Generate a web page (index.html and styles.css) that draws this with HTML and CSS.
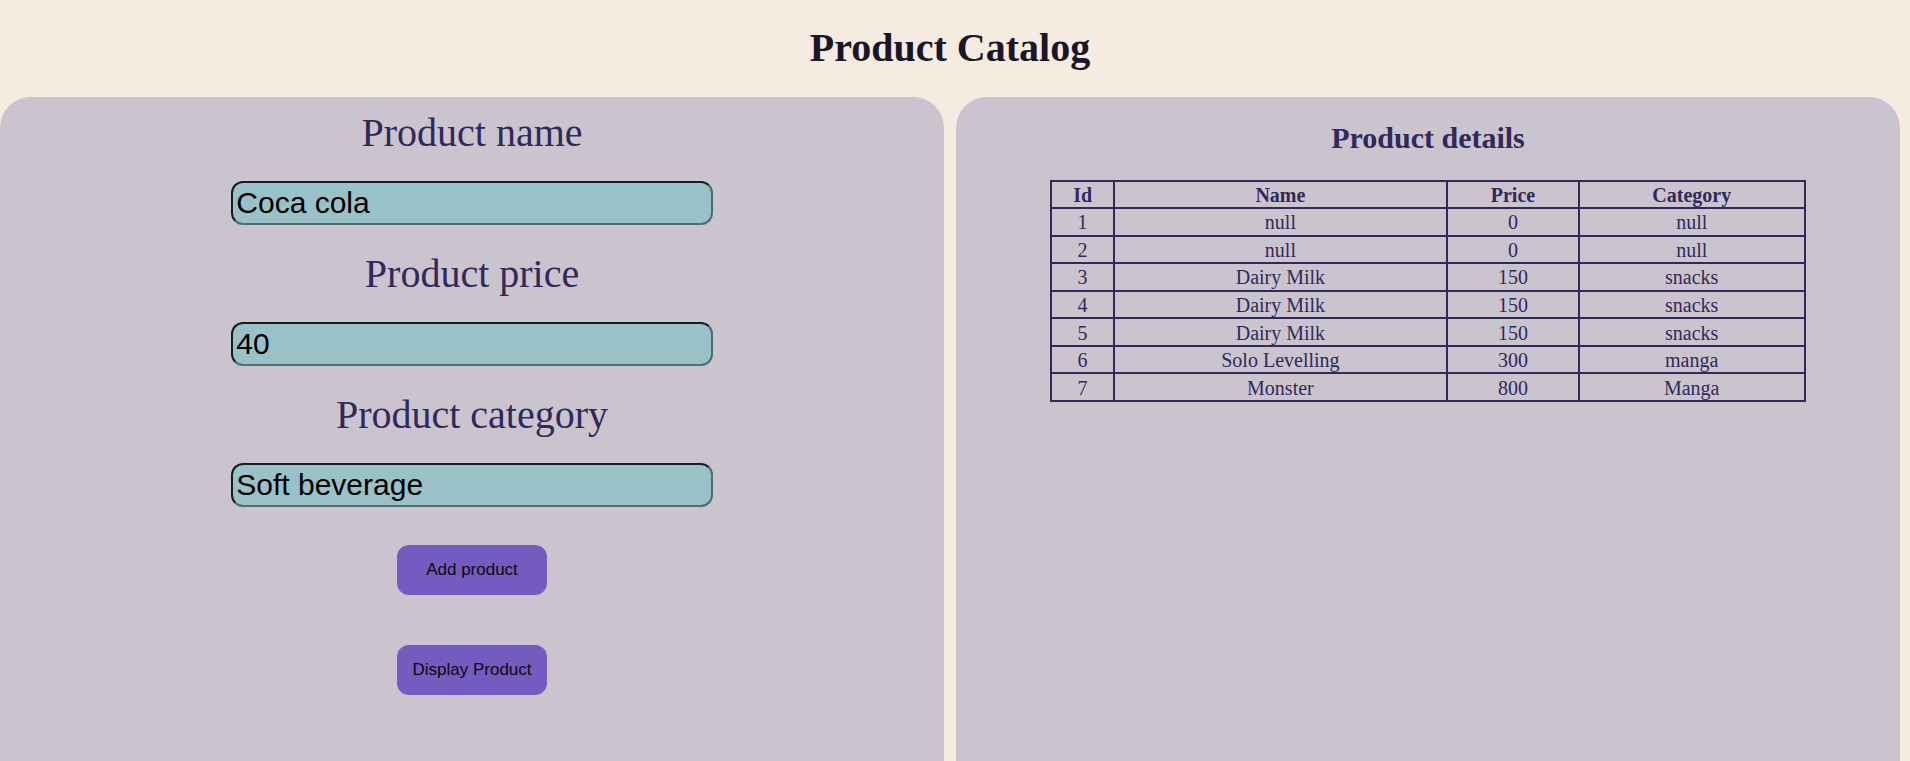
FILE: index.html
```html
<!DOCTYPE html>
<html lang="en">
<head>
<meta charset="utf-8">
<title>Product Catalog</title>
<link rel="stylesheet" href="styles.css">
</head>
<body>
<h1 class="page-title">Product Catalog</h1>
<main class="panels">
  <form class="panel product-form">
    <div class="field">
      <label for="name">Product name</label>
      <input id="name" type="text" value="Coca cola">
    </div>
    <div class="field">
      <label for="price">Product price</label>
      <input id="price" type="text" value="40">
    </div>
    <div class="field">
      <label for="category">Product category</label>
      <input id="category" type="text" value="Soft beverage">
    </div>
    <div class="actions">
      <button type="button">Add product</button>
      <button type="button">Display Product</button>
    </div>
  </form>
  <section class="panel details">
    <h2>Product details</h2>
    <table>
      <thead>
        <tr><th>Id</th><th>Name</th><th>Price</th><th>Category</th></tr>
      </thead>
      <tbody>
        <tr><td>1</td><td>null</td><td>0</td><td>null</td></tr>
        <tr><td>2</td><td>null</td><td>0</td><td>null</td></tr>
        <tr><td>3</td><td>Dairy Milk</td><td>150</td><td>snacks</td></tr>
        <tr><td>4</td><td>Dairy Milk</td><td>150</td><td>snacks</td></tr>
        <tr><td>5</td><td>Dairy Milk</td><td>150</td><td>snacks</td></tr>
        <tr><td>6</td><td>Solo Levelling</td><td>300</td><td>manga</td></tr>
        <tr><td>7</td><td>Monster</td><td>800</td><td>Manga</td></tr>
      </tbody>
    </table>
  </section>
</main>
</body>
</html>
```

FILE: styles.css
```css
* {
  box-sizing: border-box;
}

body {
  display: flex;
  flex-direction: column;
  min-height: 100vh;
  margin: 0;
  padding-right: 10px;
  background: #f6ebe0;
  color: #32285a;
  font-family: "Liberation Serif", "Times New Roman", serif;
}

.page-title {
  margin: 0;
  padding: 25px 0 26px;
  color: #1a1628;
  font-size: 40px;
  line-height: 46px;
  text-align: center;
}

.panels {
  display: grid;
  flex: 1;
  grid-template-columns: 1fr 1fr;
  gap: 12px;
}

.panel {
  display: flex;
  flex-direction: column;
  align-items: center;
  border-radius: 31px 31px 0 0;
  background: #cac4cf;
}

.product-form {
  gap: 26px;
  padding: 13px 0 24px;
}

.field {
  display: flex;
  flex-direction: column;
  align-items: center;
  gap: 25px;
  width: 100%;
}

.field label {
  font-size: 40px;
  line-height: 46px;
}

.field input {
  width: 51%;
  height: 44px;
  padding: 1px 3px;
  border: 2px solid;
  border-color: #161c1f #4a6f73 #4a6f73 #161c1f;
  border-radius: 12px;
  background: #9ac1c8;
  color: #000;
  font-family: "Liberation Sans", Arial, sans-serif;
  font-size: 30px;
}

.actions {
  display: flex;
  flex-direction: column;
  gap: 50px;
  padding-top: 12px;
}

.actions button {
  width: 150px;
  height: 50px;
  padding: 0;
  border: 0;
  border-radius: 12px;
  background: #735bbf;
  color: #0b0913;
  font-family: "Liberation Sans", Arial, sans-serif;
  font-size: 17px;
}

.details {
  gap: 25px;
  padding: 24px 0;
}

.details h2 {
  margin: 0;
  font-size: 30px;
  line-height: 34px;
}

.details table {
  width: 80%;
  height: 222px;
  border-collapse: collapse;
  font-size: 20px;
  line-height: 23px;
  text-align: center;
}

.details th,
.details td {
  padding: 2px 1px 0;
  border: 2px solid #32285a;
}
```
